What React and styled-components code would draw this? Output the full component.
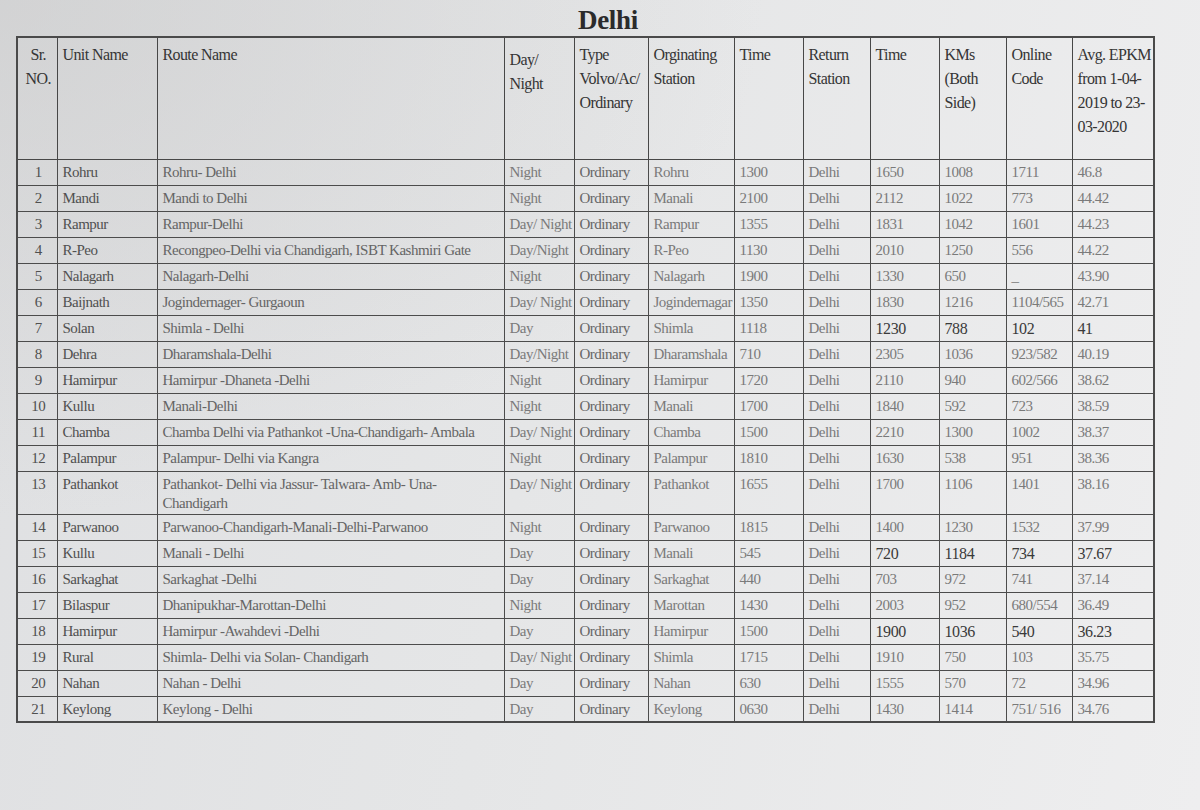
import React from 'react';
import styled, { createGlobalStyle } from 'styled-components';

const GlobalStyle = createGlobalStyle`
  html, body {
    margin: 0;
    padding: 0;
  }
  body {
    width: 1200px;
    height: 810px;
    overflow: hidden;
    font-family: 'Liberation Serif', 'Times New Roman', serif;
  }
`;

const Page = styled.div`
  width: 1200px;
  height: 810px;
  box-sizing: border-box;
  padding-top: 4px;
  background:
    radial-gradient(ellipse at 0% 0%, rgba(200, 200, 200, 0.55), rgba(200, 200, 200, 0) 45%),
    linear-gradient(100deg, #dfe0e2 0%, #e5e6e7 45%, #eeeeef 100%);
`;

const Title = styled.h1`
  margin: 0;
  padding-left: 16px;
  height: 32px;
  line-height: 32px;
  text-align: center;
  font-size: 27px;
  font-weight: 700;
  color: #2b2b2b;
  letter-spacing: -0.3px;
`;

const TableWrap = styled.div`
  padding-left: 16px;
`;

const Sheet = styled.table`
  width: 1137px;
  table-layout: fixed;
  border-collapse: collapse;
  border: 2px solid #4a4a4a;
`;

const Col = styled.col`
  width: ${(p) => p.$w}px;
`;

const HeadRow = styled.tr`
  height: 122px;
`;

const BodyRow = styled.tr`
  height: 26px;
`;

const HeadCell = styled.th`
  border: 1px solid #474747;
  vertical-align: top;
  text-align: ${(p) => p.$align || 'left'};
  padding: ${(p) => (p.$low ? '10px' : '5px')} 3px 0 5px;
  font-size: 16px;
  font-weight: 400;
  line-height: 24px;
  letter-spacing: -0.6px;
  color: #353535;
  white-space: nowrap;
  overflow: hidden;
`;

const tones = {
  dark: '#505050',
  mid: '#656565',
  light: '#7a7a7a',
};

const Cell = styled.td`
  border: 1px solid #4c4c4c;
  vertical-align: top;
  text-align: ${(p) => p.$align || 'left'};
  padding: 3px 3px 1px 5px;
  font-size: ${(p) => (p.$strong ? '16px' : '15px')};
  line-height: 19px;
  letter-spacing: ${(p) => (p.$strong ? '-0.4px' : '-0.5px')};
  color: ${(p) => (p.$strong ? '#3a3a3a' : tones[p.$tone] || tones.mid)};
  white-space: nowrap;
  overflow: hidden;
`;

const RouteCell = styled(Cell)`
  white-space: normal;
`;

const widths = [40, 100, 347, 70, 74, 86, 69, 67, 69, 67, 66, 82];

const rows = [
  [1, 'Rohru', 'Rohru- Delhi', 'Night', 'Ordinary', 'Rohru', '1300', 'Delhi', '1650', '1008', '1711', '46.8'],
  [2, 'Mandi', 'Mandi to Delhi', 'Night', 'Ordinary', 'Manali', '2100', 'Delhi', '2112', '1022', '773', '44.42'],
  [3, 'Rampur', 'Rampur-Delhi', 'Day/ Night', 'Ordinary', 'Rampur', '1355', 'Delhi', '1831', '1042', '1601', '44.23'],
  [4, 'R-Peo', 'Recongpeo-Delhi via Chandigarh, ISBT Kashmiri Gate', 'Day/Night', 'Ordinary', 'R-Peo', '1130', 'Delhi', '2010', '1250', '556', '44.22'],
  [5, 'Nalagarh', 'Nalagarh-Delhi', 'Night', 'Ordinary', 'Nalagarh', '1900', 'Delhi', '1330', '650', '_', '43.90'],
  [6, 'Baijnath', 'Jogindernager- Gurgaoun', 'Day/ Night', 'Ordinary', 'Jogindernagar', '1350', 'Delhi', '1830', '1216', '1104/565', '42.71'],
  [7, 'Solan', 'Shimla - Delhi', 'Day', 'Ordinary', 'Shimla', '1118', 'Delhi', '1230', '788', '102', '41'],
  [8, 'Dehra', 'Dharamshala-Delhi', 'Day/Night', 'Ordinary', 'Dharamshala', '710', 'Delhi', '2305', '1036', '923/582', '40.19'],
  [9, 'Hamirpur', 'Hamirpur -Dhaneta -Delhi', 'Night', 'Ordinary', 'Hamirpur', '1720', 'Delhi', '2110', '940', '602/566', '38.62'],
  [10, 'Kullu', 'Manali-Delhi', 'Night', 'Ordinary', 'Manali', '1700', 'Delhi', '1840', '592', '723', '38.59'],
  [11, 'Chamba', 'Chamba Delhi via Pathankot -Una-Chandigarh- Ambala', 'Day/ Night', 'Ordinary', 'Chamba', '1500', 'Delhi', '2210', '1300', '1002', '38.37'],
  [12, 'Palampur', 'Palampur- Delhi via Kangra', 'Night', 'Ordinary', 'Palampur', '1810', 'Delhi', '1630', '538', '951', '38.36'],
  [13, 'Pathankot', ['Pathankot- Delhi via Jassur- Talwara- Amb- Una-', 'Chandigarh'], 'Day/ Night', 'Ordinary', 'Pathankot', '1655', 'Delhi', '1700', '1106', '1401', '38.16'],
  [14, 'Parwanoo', 'Parwanoo-Chandigarh-Manali-Delhi-Parwanoo', 'Night', 'Ordinary', 'Parwanoo', '1815', 'Delhi', '1400', '1230', '1532', '37.99'],
  [15, 'Kullu', 'Manali - Delhi', 'Day', 'Ordinary', 'Manali', '545', 'Delhi', '720', '1184', '734', '37.67'],
  [16, 'Sarkaghat', 'Sarkaghat -Delhi', 'Day', 'Ordinary', 'Sarkaghat', '440', 'Delhi', '703', '972', '741', '37.14'],
  [17, 'Bilaspur', 'Dhanipukhar-Marottan-Delhi', 'Night', 'Ordinary', 'Marottan', '1430', 'Delhi', '2003', '952', '680/554', '36.49'],
  [18, 'Hamirpur', 'Hamirpur -Awahdevi -Delhi', 'Day', 'Ordinary', 'Hamirpur', '1500', 'Delhi', '1900', '1036', '540', '36.23'],
  [19, 'Rural', 'Shimla- Delhi via Solan- Chandigarh', 'Day/ Night', 'Ordinary', 'Shimla', '1715', 'Delhi', '1910', '750', '103', '35.75'],
  [20, 'Nahan', 'Nahan - Delhi', 'Day', 'Ordinary', 'Nahan', '630', 'Delhi', '1555', '570', '72', '34.96'],
  [21, 'Keylong', 'Keylong - Delhi', 'Day', 'Ordinary', 'Keylong', '0630', 'Delhi', '1430', '1414', '751/ 516', '34.76'],
];

// rows whose last four figures were printed darker on the sheet
const darkRows = [7, 15, 18];

// tone per column, after the route name
const colTones = ['light', 'mid', 'light', 'light', 'light', 'light', 'light', 'light', 'light'];

const headers = [
  { lines: ['Sr.', 'NO.'], align: 'center' },
  { lines: ['Unit Name'] },
  { lines: ['Route Name'] },
  { lines: ['Day/', 'Night'], low: true },
  { lines: ['Type', 'Volvo/Ac/', 'Ordinary'] },
  { lines: ['Orginating', 'Station'] },
  { lines: ['Time'] },
  { lines: ['Return', 'Station'] },
  { lines: ['Time'] },
  { lines: ['KMs', '(Both', 'Side)'] },
  { lines: ['Online', 'Code'] },
  { lines: ['Avg. EPKM', 'from 1-04-', '2019 to 23-', '03-2020'] },
];

const App = () => {
  return (
    <Page>
      <GlobalStyle />
      <Title>Delhi</Title>
      <TableWrap>
        <Sheet>
          <colgroup>
            {widths.map((w, i) => (
              <Col key={i} $w={w} />
            ))}
          </colgroup>
          <thead>
            <HeadRow>
              {headers.map((h, i) => (
                <HeadCell key={i} $align={h.align} $low={h.low}>
                  {h.lines.map((line, j) => (
                    <React.Fragment key={j}>
                      {j > 0 && <br />}
                      {line}
                    </React.Fragment>
                  ))}
                </HeadCell>
              ))}
            </HeadRow>
          </thead>
          <tbody>
            {rows.map(([sr, unit, route, ...rest]) => (
              <BodyRow key={sr}>
                <Cell $align="center" $tone="dark">{sr}</Cell>
                <Cell $tone="dark">{unit}</Cell>
                <RouteCell>
                  {Array.isArray(route) ? (
                    <>
                      {route[0]}
                      <br />
                      {route[1]}
                    </>
                  ) : (
                    route
                  )}
                </RouteCell>
                {rest.map((value, i) => (
                  <Cell
                    key={i}
                    $tone={colTones[i]}
                    $strong={darkRows.includes(sr) && i >= 5}
                  >
                    {value}
                  </Cell>
                ))}
              </BodyRow>
            ))}
          </tbody>
        </Sheet>
      </TableWrap>
    </Page>
  );
};

export default App;
